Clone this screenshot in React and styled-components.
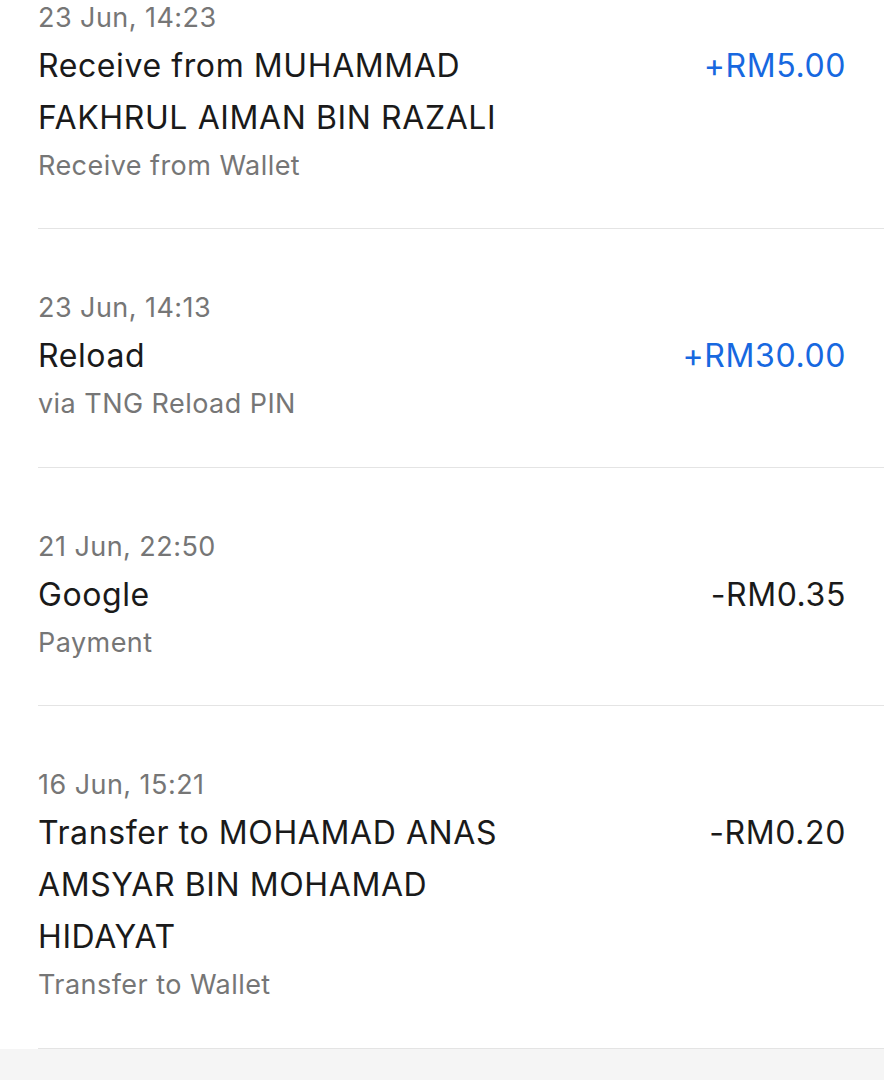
import React from "react";
import styled, { createGlobalStyle } from "styled-components";

const Global = createGlobalStyle`
  html, body { margin: 0; padding: 0; background: #ffffff; }
  body { font-family: Inter, "Noto Sans", sans-serif; -webkit-font-smoothing: antialiased; }
`;

const Page = styled.div`
  width: 884px;
  height: 1080px;
  overflow: hidden;
  display: flex;
  flex-direction: column;
  background: #f5f5f5;
`;

const List = styled.div`
  background: #ffffff;
  margin-top: -61px;
  display: flex;
  flex-direction: column;
`;

const Row = styled.div`
  margin-left: 38px;
  padding: 57px 38px 40.4px 0;
  border-bottom: 1px solid #e4e4e4;
  display: flex;
  flex-direction: column;
`;

const Meta = styled.div`
  font-size: 27px;
  line-height: 44px;
  color: #767676;
  letter-spacing: 0.45px;
`;

const Main = styled.div`
  display: flex;
  justify-content: space-between;
  align-items: flex-start;
  gap: 20px;
`;

const Title = styled.div`
  max-width: 520px;
  font-size: 32px;
  line-height: 52px;
  letter-spacing: 0.6px;
  color: #1a1a1a;
`;

const Amount = styled.div`
  font-size: 32px;
  line-height: 52px;
  letter-spacing: 0.6px;
  white-space: nowrap;
  color: ${(p) => (p.$credit ? "#1768e0" : "#1a1a1a")};
`;

const data = [
  { date: "23 Jun, 14:23", title: "Receive from MUHAMMAD FAKHRUL AIMAN BIN RAZALI", sub: "Receive from Wallet", amount: "+RM5.00", credit: true },
  { date: "23 Jun, 14:13", title: "Reload", sub: "via TNG Reload PIN", amount: "+RM30.00", credit: true },
  { date: "21 Jun, 22:50", title: "Google", sub: "Payment", amount: "-RM0.35", credit: false },
  { date: "16 Jun, 15:21", title: "Transfer to MOHAMAD ANAS AMSYAR BIN MOHAMAD HIDAYAT", sub: "Transfer to Wallet", amount: "-RM0.20", credit: false },
];

export default function App() {
  return (
    <Page>
      <Global />
      <List>
        {data.map((t, i) => (
          <Row key={i}>
            <Meta>{t.date}</Meta>
            <Main>
              <Title>{t.title}</Title>
              <Amount $credit={t.credit}>{t.amount}</Amount>
            </Main>
            <Meta>{t.sub}</Meta>
          </Row>
        ))}
      </List>
    </Page>
  );
}
